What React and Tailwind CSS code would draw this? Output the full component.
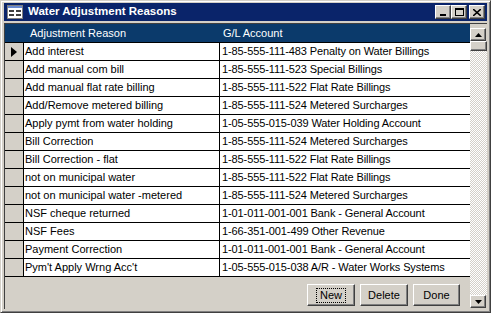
import React from 'react';

const rows = [
  ['Add interest', '1-85-555-111-483 Penalty on Water Billings'],
  ['Add manual com bill', '1-85-555-111-523 Special Billings'],
  ['Add manual flat rate billing', '1-85-555-111-522 Flat Rate Billings'],
  ['Add/Remove metered billing', '1-85-555-111-524 Metered Surcharges'],
  ['Apply pymt from water holding', '1-05-555-015-039 Water Holding Account'],
  ['Bill Correction', '1-85-555-111-524 Metered Surcharges'],
  ['Bill Correction - flat', '1-85-555-111-522 Flat Rate Billings'],
  ['not on municipal water', '1-85-555-111-522 Flat Rate Billings'],
  ['not on municipal water -metered', '1-85-555-111-524 Metered Surcharges'],
  ['NSF cheque returned', '1-01-011-001-001 Bank - General Account'],
  ['NSF Fees', '1-66-351-001-499 Other Revenue'],
  ['Payment Correction', '1-01-011-001-001 Bank - General Account'],
  ["Pym't Apply Wrng Acc't", '1-05-555-015-038 A/R - Water Works Systems'],
];

// classic raised bevel
const bevel =
  'border border-t-white border-l-white border-r-[#404040] border-b-[#404040] shadow-[inset_-1px_-1px_#808080]';

const CaptionButton = ({ children, className = '' }) => (
  <div className={`w-[16px] h-[14px] bg-[#d4d0c8] flex items-center justify-center ${bevel} ${className}`}>
    {children}
  </div>
);

const FormButton = ({ label, focused, className = '' }) => (
  <button
    className={`h-[22px] bg-[#d4d0c8] text-[11px] text-black flex items-center justify-center ${bevel} ${className}`}
  >
    <span className={focused ? 'outline-1 outline-dotted outline-black px-[3px] leading-[13px]' : 'leading-[13px]'}>
      {label}
    </span>
  </button>
);

const ArrowButton = ({ up }) => (
  <div className={`w-[16px] h-[13px] bg-[#d4d0c8] flex items-center justify-center ${bevel}`}>
    <svg width="7" height="4" viewBox="0 0 7 4">
      {up ? <polygon points="3.5,0 7,4 0,4" fill="#000" /> : <polygon points="0,0 7,0 3.5,4" fill="#000" />}
    </svg>
  </div>
);

export default function App() {
  return (
    <div
      className="w-[491px] h-[313px] bg-[#d4d0c8] border border-t-[#d4d0c8] border-l-[#d4d0c8] border-r-[#404040] border-b-[#404040] shadow-[inset_1px_1px_#fff,inset_-1px_-1px_#808080] px-[3px] pt-[2px] pb-[3px] flex flex-col"
      style={{ fontFamily: '"Liberation Sans", Arial, sans-serif' }}
    >
      {/* Title bar */}
      <div className="h-[18px] bg-[#0a246a] flex items-center pl-[3px] pr-[2px] shrink-0">
        <svg width="16" height="14" viewBox="0 0 16 14" className="shrink-0">
          <rect x="0.5" y="0.5" width="15" height="13" fill="#fff" stroke="#808080" />
          <rect x="1" y="1" width="14" height="2" fill="#6a8ad0" />
          <rect x="2" y="5" width="5" height="2" fill="#404040" />
          <rect x="9" y="5" width="5" height="2" fill="#404040" />
          <rect x="2" y="9" width="5" height="2" fill="#404040" />
          <rect x="9" y="9" width="5" height="2" fill="#404040" />
        </svg>
        <span className="ml-[5px] text-white font-bold text-[11.5px] leading-none">
          Water Adjustment Reasons
        </span>
        <div className="ml-auto flex items-center">
          <CaptionButton>
            <div className="w-[6px] h-[2px] bg-black mt-[6px] -ml-[1px]" />
          </CaptionButton>
          <CaptionButton>
            <div className="w-[9px] h-[8px] border border-black border-t-2" />
          </CaptionButton>
          <CaptionButton className="ml-[2px]">
            <svg width="8" height="7" viewBox="0 0 8 7">
              <path d="M0 0 L8 7 M8 0 L0 7" stroke="#000" strokeWidth="1.6" />
            </svg>
          </CaptionButton>
        </div>
      </div>

      {/* Body */}
      <div className="flex-1 flex mt-[2px] border-l border-t border-[#404040] min-h-0">
        {/* Datasheet */}
        <div className="flex-1 flex flex-col bg-[#d4d0c8]">
          <div className="h-[18px] bg-[#0b3a6b] flex text-white text-[11px] items-center shrink-0">
            <div className="w-[20px]" />
            <div className="w-[196px] pl-[5px]">Adjustment Reason</div>
            <div className="flex-1 pl-[2px]">G/L Account</div>
          </div>
          <div className="border-t border-black">
            {rows.map(([reason, account], i) => (
              <div key={i} className="h-[18px] flex border-b border-black text-[11px] text-black">
                <div className="w-[19px] bg-[#d4d0c8] border-r border-black flex items-center justify-center">
                  {i === 0 && (
                    <svg width="6" height="10" viewBox="0 0 6 10">
                      <polygon points="0,0 6,5 0,10" fill="#000" />
                    </svg>
                  )}
                </div>
                <div className="w-[196px] bg-white border-r border-black pl-[1px] flex items-center whitespace-nowrap overflow-hidden">
                  {reason}
                </div>
                <div className="flex-1 bg-white pl-[2px] flex items-center whitespace-nowrap overflow-hidden tracking-[-0.1px]">
                  {account}
                </div>
              </div>
            ))}
          </div>
          <div className="flex-1 flex items-end justify-end pr-[10px] pb-[3px] gap-[5px]">
            <FormButton label="New" focused className="w-[48px]" />
            <FormButton label="Delete" className="w-[48px]" />
            <FormButton label="Done" className="w-[47px]" />
          </div>
        </div>

        {/* Scrollbar */}
        <div className="w-[17px] flex flex-col pt-[4px] pb-[1px]">
          <ArrowButton up />
          <div className="h-[10px] bg-[#d4d0c8] border border-t-white border-l-white border-r-[#404040] border-b-[#404040] shadow-[inset_-1px_-1px_#808080]" />
          <div className="flex-1 bg-[repeating-conic-gradient(#ffffff_0_25%,#d4d0c8_0_50%)] bg-[length:2px_2px]" />
          <ArrowButton />
        </div>
      </div>
    </div>
  );
}
